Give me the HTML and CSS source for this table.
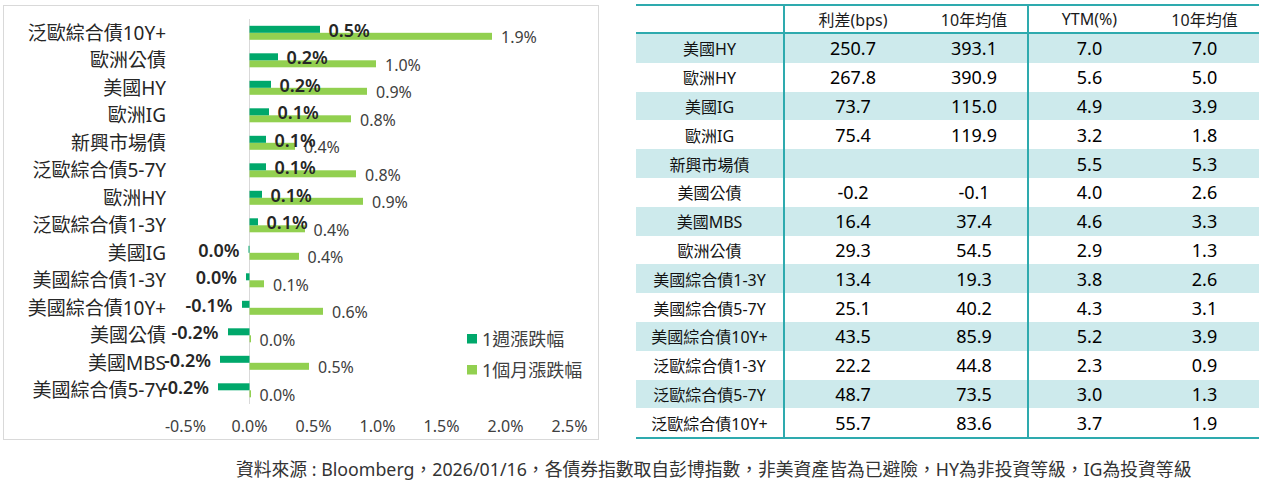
FILE: index.html
```html
<!DOCTYPE html>
<html lang="zh-Hant">
<head>
<meta charset="utf-8">
<title>債券指數</title>
<link rel="stylesheet" href="styles.css">
</head>
<body>
<div class="page">
  <div class="top">
    <div class="chart">
      <svg class="chart-svg" width="596" height="435" viewBox="3 5 596 435" xmlns="http://www.w3.org/2000/svg">
        <rect class="frame" x="3.5" y="5.5" width="595" height="434"/>
        <line class="axis" x1="249.5" y1="19" x2="249.5" y2="404"/>
        <g class="cats">
          <text x="166" y="32.75">泛歐綜合債10Y+</text>
          <text x="166" y="60.25">歐洲公債</text>
          <text x="166" y="87.75">美國HY</text>
          <text x="166" y="115.25">歐洲IG</text>
          <text x="166" y="142.75">新興市場債</text>
          <text x="166" y="170.25">泛歐綜合債5-7Y</text>
          <text x="166" y="197.75">歐洲HY</text>
          <text x="166" y="225.25">泛歐綜合債1-3Y</text>
          <text x="166" y="252.75">美國IG</text>
          <text x="166" y="280.25">美國綜合債1-3Y</text>
          <text x="166" y="307.75">美國綜合債10Y+</text>
          <text x="166" y="335.25">美國公債</text>
          <text x="166" y="362.75">美國MBS</text>
          <text x="166" y="390.25">美國綜合債5-7Y</text>
        </g>
        <g class="bar-light">
          <rect x="249.5" y="32.8" width="242.5" height="7"/>
          <rect x="249.5" y="60.3" width="126.5" height="7"/>
          <rect x="249.5" y="87.8" width="117.5" height="7"/>
          <rect x="249.5" y="115.3" width="101.5" height="7"/>
          <rect x="249.5" y="142.8" width="45.5" height="7"/>
          <rect x="249.5" y="170.3" width="106.5" height="7"/>
          <rect x="249.5" y="197.8" width="113.5" height="7"/>
          <rect x="249.5" y="225.3" width="55.5" height="7"/>
          <rect x="249.5" y="252.8" width="49.5" height="7"/>
          <rect x="249.5" y="280.3" width="14.5" height="7"/>
          <rect x="249.5" y="307.8" width="73.5" height="7"/>
          <rect x="249.5" y="335.3" width="1.5" height="7"/>
          <rect x="249.5" y="362.8" width="59.5" height="7"/>
          <rect x="249.5" y="390.3" width="1.5" height="7"/>
        </g>
        <g class="bar-dark">
          <rect x="249.5" y="25.8" width="70.5" height="7"/>
          <rect x="249.5" y="53.3" width="28.5" height="7"/>
          <rect x="249.5" y="80.8" width="21.5" height="7"/>
          <rect x="249.5" y="108.3" width="19.5" height="7"/>
          <rect x="249.5" y="135.8" width="16.5" height="7"/>
          <rect x="249.5" y="163.3" width="16.5" height="7"/>
          <rect x="249.5" y="190.8" width="12.5" height="7"/>
          <rect x="249.5" y="218.3" width="8.5" height="7"/>
          <rect x="248.5" y="245.8" width="1" height="7"/>
          <rect x="246" y="273.3" width="3.5" height="7"/>
          <rect x="242" y="300.8" width="7.5" height="7"/>
          <rect x="228" y="328.3" width="21.5" height="7"/>
          <rect x="220" y="355.8" width="29.5" height="7"/>
          <rect x="218" y="383.3" width="31.5" height="7"/>
        </g>
        <g class="lbl-light">
          <text x="501" y="37">1.9%</text>
          <text x="385" y="64.5">1.0%</text>
          <text x="376" y="92">0.9%</text>
          <text x="360" y="119.5">0.8%</text>
          <text x="304" y="147">0.4%</text>
          <text x="365" y="174.5">0.8%</text>
          <text x="372" y="202">0.9%</text>
          <text x="313.5" y="229.5">0.4%</text>
          <text x="307.5" y="257">0.4%</text>
          <text x="273" y="284.5">0.1%</text>
          <text x="332" y="312">0.6%</text>
          <text x="259.5" y="339.5">0.0%</text>
          <text x="318" y="367">0.5%</text>
          <text x="259.5" y="394.5">0.0%</text>
        </g>
        <g class="lbl-dark">
          <text x="328.5" y="29.5">0.5%</text>
          <text x="286.5" y="57">0.2%</text>
          <text x="279.5" y="84.5">0.2%</text>
          <text x="277.5" y="112">0.1%</text>
          <text x="274.5" y="139.5">0.1%</text>
          <text x="274.5" y="167">0.1%</text>
          <text x="270.5" y="194.5">0.1%</text>
          <text x="266.5" y="222">0.1%</text>
        </g>
        <g class="lbl-dark neg">
          <text x="239.5" y="249.5">0.0%</text>
          <text x="237" y="277">0.0%</text>
          <text x="232.5" y="304.5">-0.1%</text>
          <text x="218.5" y="332">-0.2%</text>
          <text x="211" y="359.5">-0.2%</text>
          <text x="209" y="387">-0.2%</text>
        </g>
        <g class="ticks">
          <text x="185.5" y="426">-0.5%</text>
          <text x="249.5" y="426">0.0%</text>
          <text x="313.5" y="426">0.5%</text>
          <text x="377.5" y="426">1.0%</text>
          <text x="441.5" y="426">1.5%</text>
          <text x="505.5" y="426">2.0%</text>
          <text x="569.5" y="426">2.5%</text>
        </g>
        <g class="legend">
          <rect class="sw-dark" x="467" y="334" width="10" height="9.5"/>
          <text x="482" y="339">1週漲跌幅</text>
          <rect class="sw-light" x="467" y="365" width="10" height="9.5"/>
          <text x="482" y="370">1個月漲跌幅</text>
        </g>
      </svg>
    </div>

    <div class="tbl">
      <div class="tr hd">
        <div class="c c1"></div>
        <div class="c c2">利差(bps)</div>
        <div class="c c3">10年均值</div>
        <div class="c c4">YTM(%)</div>
        <div class="c c5">10年均值</div>
      </div>
      <div class="tr alt"><div class="c c1 nm">美國HY</div><div class="c c2 num">250.7</div><div class="c c3 num">393.1</div><div class="c c4 num">7.0</div><div class="c c5 num">7.0</div></div>
      <div class="tr"><div class="c c1 nm">歐洲HY</div><div class="c c2 num">267.8</div><div class="c c3 num">390.9</div><div class="c c4 num">5.6</div><div class="c c5 num">5.0</div></div>
      <div class="tr alt"><div class="c c1 nm">美國IG</div><div class="c c2 num">73.7</div><div class="c c3 num">115.0</div><div class="c c4 num">4.9</div><div class="c c5 num">3.9</div></div>
      <div class="tr"><div class="c c1 nm">歐洲IG</div><div class="c c2 num">75.4</div><div class="c c3 num">119.9</div><div class="c c4 num">3.2</div><div class="c c5 num">1.8</div></div>
      <div class="tr alt"><div class="c c1 nm">新興市場債</div><div class="c c2 num"></div><div class="c c3 num"></div><div class="c c4 num">5.5</div><div class="c c5 num">5.3</div></div>
      <div class="tr"><div class="c c1 nm">美國公債</div><div class="c c2 num">-0.2</div><div class="c c3 num">-0.1</div><div class="c c4 num">4.0</div><div class="c c5 num">2.6</div></div>
      <div class="tr alt"><div class="c c1 nm">美國MBS</div><div class="c c2 num">16.4</div><div class="c c3 num">37.4</div><div class="c c4 num">4.6</div><div class="c c5 num">3.3</div></div>
      <div class="tr"><div class="c c1 nm">歐洲公債</div><div class="c c2 num">29.3</div><div class="c c3 num">54.5</div><div class="c c4 num">2.9</div><div class="c c5 num">1.3</div></div>
      <div class="tr alt"><div class="c c1 nm">美國綜合債1-3Y</div><div class="c c2 num">13.4</div><div class="c c3 num">19.3</div><div class="c c4 num">3.8</div><div class="c c5 num">2.6</div></div>
      <div class="tr"><div class="c c1 nm">美國綜合債5-7Y</div><div class="c c2 num">25.1</div><div class="c c3 num">40.2</div><div class="c c4 num">4.3</div><div class="c c5 num">3.1</div></div>
      <div class="tr alt"><div class="c c1 nm">美國綜合債10Y+</div><div class="c c2 num">43.5</div><div class="c c3 num">85.9</div><div class="c c4 num">5.2</div><div class="c c5 num">3.9</div></div>
      <div class="tr"><div class="c c1 nm">泛歐綜合債1-3Y</div><div class="c c2 num">22.2</div><div class="c c3 num">44.8</div><div class="c c4 num">2.3</div><div class="c c5 num">0.9</div></div>
      <div class="tr alt"><div class="c c1 nm">泛歐綜合債5-7Y</div><div class="c c2 num">48.7</div><div class="c c3 num">73.5</div><div class="c c4 num">3.0</div><div class="c c5 num">1.3</div></div>
      <div class="tr"><div class="c c1 nm">泛歐綜合債10Y+</div><div class="c c2 num">55.7</div><div class="c c3 num">83.6</div><div class="c c4 num">3.7</div><div class="c c5 num">1.9</div></div>
    </div>
  </div>
  <p class="note">資料來源 : Bloomberg，2026/01/16，各債券指數取自彭博指數，非美資產皆為已避險，HY為非投資等級，IG為投資等級</p>
</div>
</body>
</html>
```

FILE: styles.css
```css
html, body {
  margin: 0;
  padding: 0;
  background: #ffffff;
}

body {
  font-family: "Noto Sans", "Noto Sans CJK TC", sans-serif;
  color: #1a1a1a;
}

.page {
  width: 1264px;
  height: 483px;
  overflow: hidden;
}

.top {
  display: flex;
  align-items: flex-start;
  padding-top: 4px;
}

.chart {
  margin-left: 3px;
  margin-top: 1px;
  width: 596px;
  height: 435px;
}

.chart-svg {
  display: block;
  font-family: "Noto Sans", "Noto Sans CJK TC", sans-serif;
}

.frame {
  fill: #ffffff;
  stroke: #d9d9d9;
  stroke-width: 1;
}

.axis {
  stroke: #d9d9d9;
  stroke-width: 1;
}

.cats text {
  font-size: 19px;
  fill: #262626;
  text-anchor: end;
  dominant-baseline: central;
}

.bar-dark rect,
.sw-dark {
  fill: #00a86b;
}

.bar-light rect,
.sw-light {
  fill: #92d050;
}

.lbl-dark text {
  font-size: 18px;
  font-weight: 600;
  fill: #262626;
  dominant-baseline: central;
}

.lbl-dark.neg text {
  text-anchor: end;
}

.lbl-light text {
  font-size: 16px;
  fill: #404040;
  dominant-baseline: central;
}

.ticks text {
  font-size: 16px;
  fill: #404040;
  text-anchor: middle;
  dominant-baseline: central;
}

.legend text {
  font-size: 18px;
  fill: #404040;
  dominant-baseline: central;
}

/* table */
.tbl {
  margin-left: 37px;
  width: 623px;
  border-top: 2px solid #2eaaae;
  border-bottom: 2px solid #2eaaae;
}

.tr {
  display: flex;
  height: 28.8px;
}

.tr.hd {
  height: 28px;
  box-sizing: border-box;
  border-bottom: 2px solid #2eaaae;
  background: #ffffff;
}

.tr.alt {
  background: #cdeaec;
}

.c {
  box-sizing: border-box;
  display: flex;
  align-items: center;
  justify-content: center;
  white-space: nowrap;
  color: #111111;
}

.c1 {
  width: 149px;
  border-right: 2px solid #2eaaae;
}

.c2 {
  width: 136px;
}

.c3 {
  width: 108px;
  border-right: 2px solid #2eaaae;
}

.c4 {
  width: 121px;
}

.c5 {
  width: 109px;
}

.hd .c {
  font-size: 16px;
  color: #1a1a1a;
}

.nm {
  font-size: 16px;
}

.num {
  font-size: 18px;
  color: #000000;
}

.note {
  margin: 17px 0 0 236px;
  font-size: 17.8px;
  line-height: 24px;
  color: #333333;
  white-space: nowrap;
}
```
